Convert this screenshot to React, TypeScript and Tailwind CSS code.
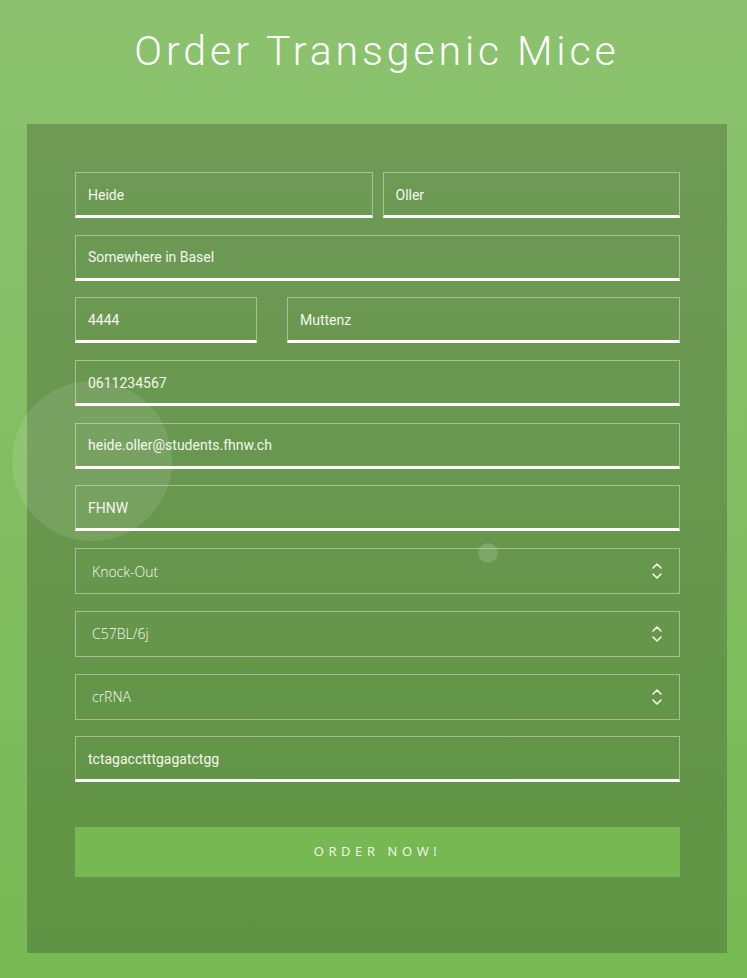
import React from "react";

function TextField({ value, className = "" }: { value: string; className?: string }) {
  return (
    <div
      className={
        "h-[46px] border border-white/40 border-b-[3px] border-b-white flex items-center pl-[12px] pt-[2px] text-[14px] text-[#f2f8ec] font-['Roboto',sans-serif] " +
        className
      }
    >
      {value}
    </div>
  );
}

function Chevrons() {
  return (
    <svg width="12" height="20" viewBox="0 0 12 20" fill="none" stroke="#f0f8ea" strokeWidth="1.6" strokeLinecap="round" strokeLinejoin="round">
      <path d="M2 7 L6 3 L10 7" />
      <path d="M2 13 L6 17 L10 13" />
    </svg>
  );
}

function SelectField({ value }: { value: string }) {
  return (
    <div className="h-[46px] border border-white/40 flex items-center justify-between pl-[16px] pr-[16px] text-[14px] font-light text-[#f4faef] font-['Open_Sans',sans-serif]">
      <span>{value}</span>
      <Chevrons />
    </div>
  );
}

export default function App() {
  return (
    <div className="relative min-h-[978px] w-full bg-gradient-to-b from-[#8cc26f] to-[#78b954] overflow-hidden">
      <div className="h-[124px] pt-[31px] pl-[7px] text-center">
        <h1 className="text-[41px] leading-[40px] font-light tracking-[3.9px] text-white font-['Roboto',sans-serif]">
          Order Transgenic Mice
        </h1>
      </div>
      <div className="ml-[27px] w-[700px] h-[829px] bg-black/20 pt-[48px] pl-[48px] pr-[47px]">
        <div className="flex flex-col gap-[16.7px]">
          <div className="flex gap-[10px]">
            <TextField value="Heide" className="flex-1" />
            <TextField value="Oller" className="flex-1" />
          </div>
          <TextField value="Somewhere in Basel" />
          <div className="flex gap-[30px]">
            <TextField value="4444" className="w-[182px]" />
            <TextField value="Muttenz" className="flex-1" />
          </div>
          <TextField value="0611234567" />
          <TextField value="heide.oller@students.fhnw.ch" />
          <TextField value="FHNW" />
          <SelectField value="Knock-Out" />
          <SelectField value="C57BL/6j" />
          <SelectField value="crRNA" />
          <TextField value="tctagacctttgagatctgg" />
        </div>
        <button className="mt-[45px] w-full h-[50px] bg-[#77b852] text-[13px] font-normal tracking-[4.6px] text-[#f2f9ee] font-['Open_Sans',sans-serif]">
          ORDER NOW!
        </button>
      </div>
      <div className="absolute left-[12px] top-[381px] w-[160px] h-[160px] rounded-full bg-white/10 pointer-events-none" />
      <div className="absolute left-[478px] top-[543px] w-[20px] h-[20px] rounded-full bg-white/15 pointer-events-none" />
    </div>
  );
}
